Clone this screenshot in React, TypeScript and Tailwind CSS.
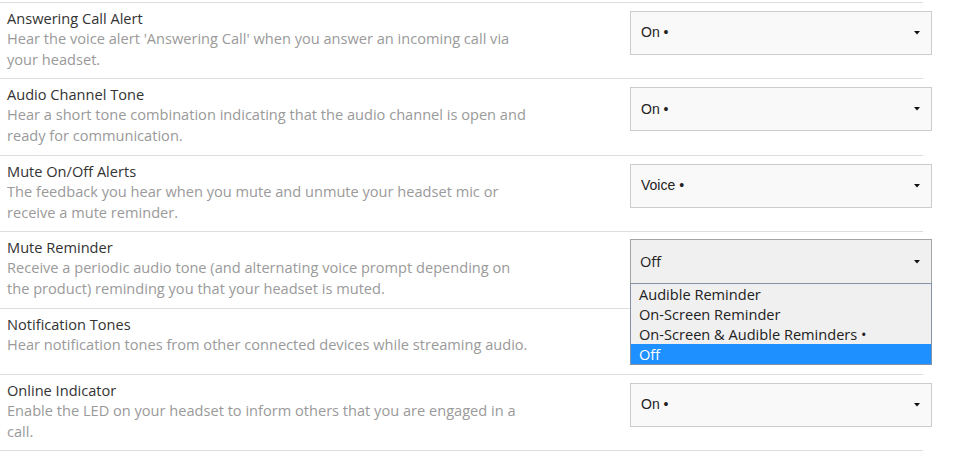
const settings = [
  {
    title: 'Answering Call Alert',
    lines: ["Hear the voice alert 'Answering Call' when you answer an incoming call via", 'your headset.'],
    value: 'On •',
  },
  {
    title: 'Audio Channel Tone',
    lines: ['Hear a short tone combination indicating that the audio channel is open and', 'ready for communication.'],
    value: 'On •',
  },
  {
    title: 'Mute On/Off Alerts',
    lines: ['The feedback you hear when you mute and unmute your headset mic or', 'receive a mute reminder.'],
    value: 'Voice •',
  },
  {
    title: 'Mute Reminder',
    lines: ['Receive a periodic audio tone (and alternating voice prompt depending on', 'the product) reminding you that your headset is muted.'],
    value: 'Off',
    open: true,
  },
  {
    title: 'Notification Tones',
    lines: ['Hear notification tones from other connected devices while streaming audio.'],
    value: 'On •',
  },
  {
    title: 'Online Indicator',
    lines: ['Enable the LED on your headset to inform others that you are engaged in a', 'call.'],
    value: 'On •',
  },
];

const reminderOptions = ['Audible Reminder', 'On-Screen Reminder', 'On-Screen & Audible Reminders •', 'Off'];

function Caret() {
  return (
    <svg width="6" height="4" viewBox="0 0 6 4" className="shrink-0">
      <path d="M0 0 L6 0 L3 3.5 Z" fill="#111" />
    </svg>
  );
}

function SettingSelect({ value, open }: { value: string; open?: boolean }) {
  if (open) {
    return (
      <div className="relative -mr-[9px] mt-[7px] mb-[13px] w-[302px] shrink-0">
        <div className="flex h-[45px] items-center justify-between border border-[#a4a4a4] bg-[#f0f0f0] pl-[9px] pr-[11px] font-['Open_Sans',sans-serif] text-[14.6px] text-[#222]">
          <span>{value}</span>
          <Caret />
        </div>
        <div className="absolute left-0 top-[44px] z-10 w-[302px] border border-[#8593a8] bg-[#f0f0f0] font-['Open_Sans',sans-serif] text-[14.6px] leading-[20px] text-[#222]">
          {reminderOptions.map((option) => (
            <div key={option} className={option === 'Off' ? 'bg-[#1e90ff] pl-[8px] text-white' : 'pl-[8px]'}>
              {option}
            </div>
          ))}
        </div>
      </div>
    );
  }

  return (
    <div className="-mr-[9px] mt-[8px] mb-[13px] flex h-[44px] w-[302px] shrink-0 items-center justify-between border border-[#cccccc] bg-[#f9f9f9] pl-[10px] pr-[11px] font-['Liberation_Sans',Arial,sans-serif] text-[14px] text-[#222]">
      <span>{value}</span>
      <Caret />
    </div>
  );
}

export default function App() {
  return (
    <div className="min-h-[451px] bg-white pt-[1.5px]">
      <div className="w-[923px] border-b border-[#dddddd]">
        {settings.map((setting) => (
          <div key={setting.title} className="flex items-start justify-between border-t border-[#dddddd]">
            <div className="w-[560px] pl-[7px] pt-[5px] pb-[8.5px] font-['Open_Sans',sans-serif] text-[14.6px] whitespace-nowrap">
              <p className="leading-[20px] text-[#333333]">{setting.title}</p>
              {setting.lines.map((line) => (
                <p key={line} className="leading-[21px] text-[#9a9a9a]">
                  {line}
                </p>
              ))}
            </div>
            <SettingSelect value={setting.value} open={setting.open} />
          </div>
        ))}
      </div>
    </div>
  );
}
